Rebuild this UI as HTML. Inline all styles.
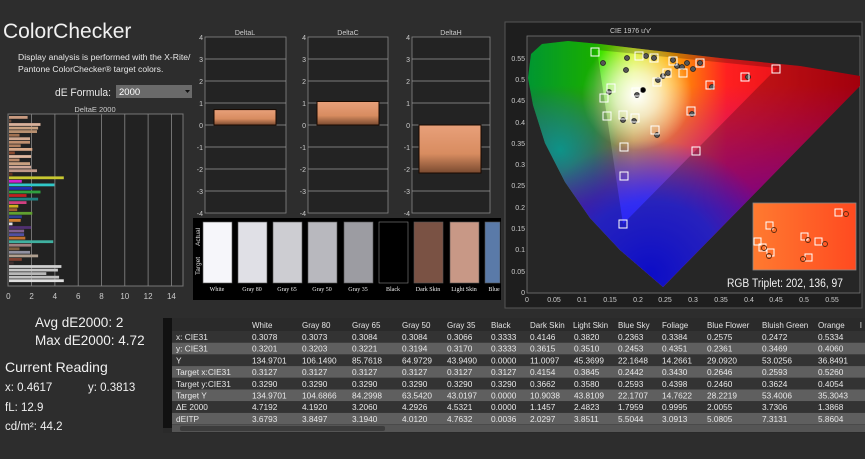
<!DOCTYPE html>
<html><head><meta charset="utf-8"><style>
html,body{margin:0;padding:0;background:#2d2d2d;}
svg{display:block;font-family:"Liberation Sans",sans-serif;}
</style></head><body>
<svg width="865" height="459" viewBox="0 0 865 459" xmlns="http://www.w3.org/2000/svg">
<defs>
<linearGradient id="bar" x1="0" y1="0" x2="0" y2="1"><stop offset="0" stop-color="#e8a07a"/><stop offset="0.6" stop-color="#d88c60"/><stop offset="1" stop-color="#7a4a30"/></linearGradient>
<linearGradient id="hx" x1="527" y1="0" x2="860" y2="0" gradientUnits="userSpaceOnUse"><stop offset="0" stop-color="#00c040"/><stop offset="0.2" stop-color="#20e000"/><stop offset="0.32" stop-color="#d0f000"/><stop offset="0.42" stop-color="#ffb000"/><stop offset="0.6" stop-color="#ff2020"/><stop offset="1" stop-color="#d00010"/></linearGradient>
<radialGradient id="hv" cx="650" cy="275" r="135" gradientUnits="userSpaceOnUse"><stop offset="0" stop-color="#1010ff" stop-opacity="1"/><stop offset="0.55" stop-color="#2030ff" stop-opacity="0.85"/><stop offset="1" stop-color="#2040ff" stop-opacity="0"/></radialGradient>
<linearGradient id="mag" x1="0" y1="85" x2="0" y2="210" gradientUnits="userSpaceOnUse"><stop offset="0" stop-color="#c000b0" stop-opacity="0"/><stop offset="1" stop-color="#9000c0" stop-opacity="0.9"/></linearGradient>
<radialGradient id="cy" cx="560" cy="150" r="60" gradientUnits="userSpaceOnUse"><stop offset="0" stop-color="#00d0c0" stop-opacity="0.8"/><stop offset="1" stop-color="#00d0c0" stop-opacity="0"/></radialGradient>
<radialGradient id="wp" cx="637" cy="95" r="55" gradientUnits="userSpaceOnUse"><stop offset="0" stop-color="#fff" stop-opacity="1"/><stop offset="0.4" stop-color="#fff" stop-opacity="0.7"/><stop offset="1" stop-color="#fff" stop-opacity="0"/></radialGradient>
<linearGradient id="ins" x1="0" y1="0" x2="1" y2="0"><stop offset="0" stop-color="#ff7a30"/><stop offset="1" stop-color="#ff4a20"/></linearGradient>
<clipPath id="hs"><path d="M663,287 L620,250 L590,218 L565,182 L545,143 L533,105 L528,78 L531,54 L542,44 L568,41 L600,44 L650,50 L720,58 L800,66 L860,76 L860,86 Z"/></clipPath>
</defs>

<text x="3" y="38" font-size="21" fill="#f0f0f0">ColorChecker</text>
<text x="18" y="60" font-size="8.6" fill="#e8e8e8">Display analysis is performed with the X-Rite/</text>
<text x="18" y="72" font-size="8.6" fill="#e8e8e8">Pantone ColorChecker® target colors.</text>
<text x="55" y="96" font-size="11" fill="#e8e8e8" textLength="56" lengthAdjust="spacingAndGlyphs">dE Formula:</text>
<rect x="116" y="85" width="76" height="13" fill="#6a6a6a"/>
<text x="119" y="95" font-size="9.5" fill="#fff">2000</text>
<path d="M185,90 l5,0 l-2.5,3 z" fill="#111"/>

<text x="95" y="112" font-size="7.5" fill="#ccc" text-anchor="middle">DeltaE 2000</text>
<rect x="8" y="114" width="175" height="172" fill="#222" stroke="#777" stroke-width="1"/>
<g stroke="#888" stroke-width="0.8">
<line x1="31.6" y1="114" x2="31.6" y2="286"/><line x1="54.9" y1="114" x2="54.9" y2="286"/><line x1="78.2" y1="114" x2="78.2" y2="286"/><line x1="101.5" y1="114" x2="101.5" y2="286"/><line x1="124.8" y1="114" x2="124.8" y2="286"/><line x1="148.1" y1="114" x2="148.1" y2="286"/><line x1="171.4" y1="114" x2="171.4" y2="286"/>
</g>
<g font-size="8" fill="#ccc" text-anchor="middle">
<text x="8.3" y="299">0</text><text x="31.6" y="299">2</text><text x="54.9" y="299">4</text><text x="78.2" y="299">6</text><text x="101.5" y="299">8</text><text x="124.8" y="299">10</text><text x="148.1" y="299">12</text><text x="171.4" y="299">14</text>
</g>
<g>
<rect x="9" y="116.0" width="18.6" height="2.8" fill="#c89a80"/>
<rect x="9" y="119.6" width="2.3" height="2.8" fill="#6a4a3a"/>
<rect x="9" y="123.1" width="31.5" height="2.8" fill="#d8b09a"/>
<rect x="9" y="126.7" width="29.1" height="2.8" fill="#c8a080"/>
<rect x="9" y="130.2" width="28" height="2.8" fill="#b89070"/>
<rect x="9" y="133.8" width="10.5" height="2.8" fill="#a07050"/>
<rect x="9" y="137.3" width="21" height="2.8" fill="#d0a890"/>
<rect x="9" y="140.9" width="21" height="2.8" fill="#c09070"/>
<rect x="9" y="144.4" width="11.7" height="2.8" fill="#b08060"/>
<rect x="9" y="148.0" width="23.3" height="2.8" fill="#d8a888"/>
<rect x="9" y="151.5" width="5.8" height="2.8" fill="#8a4a30"/>
<rect x="9" y="155.1" width="22.1" height="2.8" fill="#e0b8a0"/>
<rect x="9" y="158.6" width="10.5" height="2.8" fill="#b88868"/>
<rect x="9" y="162.2" width="21" height="2.8" fill="#c8a080"/>
<rect x="9" y="165.7" width="22.1" height="2.8" fill="#d0a898"/>
<rect x="9" y="169.3" width="28" height="2.8" fill="#c09888"/>
<rect x="9" y="172.8" width="3.5" height="2.8" fill="#603020"/>
<rect x="9" y="176.4" width="54.8" height="2.8" fill="#c8c830"/>
<rect x="9" y="179.9" width="12.8" height="2.8" fill="#d020d0"/>
<rect x="9" y="183.5" width="45.4" height="2.8" fill="#30c8c8"/>
<rect x="9" y="187.0" width="23.3" height="2.8" fill="#2030b0"/>
<rect x="9" y="190.6" width="31.5" height="2.8" fill="#30a040"/>
<rect x="9" y="194.1" width="17.5" height="2.8" fill="#c02020"/>
<rect x="9" y="197.7" width="29.1" height="2.8" fill="#208080"/>
<rect x="9" y="201.2" width="17.5" height="2.8" fill="#d04080"/>
<rect x="9" y="204.8" width="9.3" height="2.8" fill="#d0b020"/>
<rect x="9" y="208.3" width="8.2" height="2.8" fill="#a06030"/>
<rect x="9" y="211.9" width="23.3" height="2.8" fill="#60a030"/>
<rect x="9" y="215.4" width="12.8" height="2.8" fill="#304090"/>
<rect x="9" y="219.0" width="11.7" height="2.8" fill="#d08030"/>
<rect x="9" y="222.5" width="3.5" height="2.8" fill="#e0e0e0"/>
<rect x="9" y="226.1" width="22.1" height="2.8" fill="#503070"/>
<rect x="9" y="229.6" width="15.1" height="2.8" fill="#806090"/>
<rect x="9" y="233.2" width="15.1" height="2.8" fill="#5050a0"/>
<rect x="9" y="236.7" width="16.3" height="2.8" fill="#c07030"/>
<rect x="9" y="240.3" width="44.3" height="2.8" fill="#40b0a0"/>
<rect x="9" y="243.8" width="22.1" height="2.8" fill="#a08080"/>
<rect x="9" y="247.4" width="10.5" height="2.8" fill="#806040"/>
<rect x="9" y="250.9" width="21" height="2.8" fill="#9090a0"/>
<rect x="9" y="254.5" width="29.1" height="2.8" fill="#b0a090"/>
<rect x="9" y="258.0" width="12.8" height="2.8" fill="#804030"/>
<rect x="9" y="261.6" width="4.7" height="2.8" fill="#403030"/>
<rect x="9" y="265.1" width="52.4" height="2.8" fill="#d0d0d0"/>
<rect x="9" y="268.7" width="48.9" height="2.8" fill="#c8c8c8"/>
<rect x="9" y="272.2" width="37.3" height="2.8" fill="#b8b8b8"/>
<rect x="9" y="275.8" width="50.1" height="2.8" fill="#c0c0c0"/>
<rect x="9" y="279.3" width="54.8" height="2.8" fill="#e0e0e0"/>
</g>

<text x="35" y="327" font-size="13.5" fill="#f0f0f0">Avg dE2000: 2</text>
<text x="35" y="345" font-size="13.5" fill="#f0f0f0">Max dE2000: 4.72</text>
<text x="5" y="372" font-size="14" fill="#f0f0f0">Current Reading</text>
<text x="5" y="391" font-size="11.5" fill="#f0f0f0">x: 0.4617</text>
<text x="88" y="391" font-size="11.5" fill="#f0f0f0">y: 0.3813</text>
<text x="5" y="411" font-size="11.5" fill="#f0f0f0">fL: 12.9</text>
<text x="5" y="430" font-size="11.5" fill="#f0f0f0">cd/m²: 44.2</text>

<g font-size="7" fill="#ccc">
<text x="245" y="35" text-anchor="middle">DeltaL</text>
<text x="348" y="35" text-anchor="middle">DeltaC</text>
<text x="451" y="35" text-anchor="middle">DeltaH</text>
</g>
<g fill="#232323" stroke="#888" stroke-width="0.8">
<rect x="205" y="37" width="81" height="176"/>
<rect x="308" y="37" width="80" height="176"/>
<rect x="412" y="37" width="78" height="176"/>
</g>
<g stroke="#999" stroke-width="0.8">
<path d="M205,59H286M205,81H286M205,103H286M205,125H286M205,147H286M205,169H286M205,191H286"/>
<path d="M308,59H388M308,81H388M308,103H388M308,125H388M308,147H388M308,169H388M308,191H388"/>
<path d="M412,59H490M412,81H490M412,103H490M412,125H490M412,147H490M412,169H490M412,191H490"/>
</g>
<g font-size="7" fill="#ccc" text-anchor="end">
<text x="203" y="40">4</text><text x="203" y="62">3</text><text x="203" y="84">2</text><text x="203" y="106">1</text><text x="203" y="128">0</text><text x="203" y="150">-1</text><text x="203" y="172">-2</text><text x="203" y="194">-3</text><text x="203" y="216">-4</text>
<text x="306" y="40">4</text><text x="306" y="62">3</text><text x="306" y="84">2</text><text x="306" y="106">1</text><text x="306" y="128">0</text><text x="306" y="150">-1</text><text x="306" y="172">-2</text><text x="306" y="194">-3</text><text x="306" y="216">-4</text>
<text x="410" y="40">4</text><text x="410" y="62">3</text><text x="410" y="84">2</text><text x="410" y="106">1</text><text x="410" y="128">0</text><text x="410" y="150">-1</text><text x="410" y="172">-2</text><text x="410" y="194">-3</text><text x="410" y="216">-4</text>
</g>
<rect x="214" y="109.6" width="62" height="15.4" fill="url(#bar)" stroke="#1a0a00" stroke-width="1"/>
<rect x="317" y="101.5" width="62" height="23.5" fill="url(#bar)" stroke="#1a0a00" stroke-width="1"/>
<rect x="419" y="125" width="62" height="48" fill="url(#bar)" stroke="#1a0a00" stroke-width="1"/>

<rect x="193" y="218" width="308" height="82" fill="#000"/>
<text transform="translate(200,246) rotate(-90)" font-size="6.5" fill="#ddd">Actual</text>
<text transform="translate(200,275) rotate(-90)" font-size="6.5" fill="#ddd">Target</text>
<g stroke="#555" stroke-width="0.6">
<rect x="203" y="222" width="29" height="61" fill="#f6f6fa"/>
<rect x="238" y="222" width="29" height="61" fill="#e0e0e6"/>
<rect x="273" y="222" width="29" height="61" fill="#cdcdd2"/>
<rect x="308" y="222" width="29" height="61" fill="#b8b8be"/>
<rect x="344" y="222" width="29" height="61" fill="#9c9ca2"/>
<rect x="379" y="222" width="29" height="61" fill="#000" stroke="#888"/>
<rect x="414" y="222" width="29" height="61" fill="#7a5244"/>
<rect x="450" y="222" width="29" height="61" fill="#c89886"/>
<rect x="485" y="222" width="15" height="61" fill="#5a7aa8"/>
</g>
<g font-size="6" fill="#eee" text-anchor="middle" font-family="Liberation Serif,serif">
<text x="217" y="291">White</text><text x="252" y="291">Gray 80</text><text x="287" y="291">Gray 65</text><text x="322" y="291">Gray 50</text><text x="358" y="291">Gray 35</text><text x="393" y="291">Black</text><text x="428" y="291">Dark Skin</text><text x="464" y="291">Light Skin</text><text x="494" y="291">Blue</text>
</g>

<rect x="505" y="22" width="357" height="286" fill="#1e1e1e" stroke="#555" stroke-width="1"/>
<text x="610" y="33" font-size="7" fill="#ccc">CIE 1976 u'v'</text>
<rect x="527" y="36" width="333" height="257" fill="#262626" stroke="#777" stroke-width="0.8"/>
<g clip-path="url(#hs)">
<rect x="520" y="36" width="345" height="260" fill="url(#hx)"/>
<rect x="520" y="36" width="345" height="260" fill="url(#mag)"/>
<rect x="520" y="36" width="345" height="260" fill="url(#cy)"/>
<rect x="520" y="36" width="345" height="260" fill="url(#hv)"/>
<rect x="520" y="36" width="345" height="260" fill="url(#wp)"/>
<path d="M520,30 H870 V300 H520 Z M597,50 L777,68 L623,224 Z" fill="#000" fill-opacity="0.22" fill-rule="evenodd"/>
</g>
<g font-size="7" fill="#ccc" text-anchor="end">
<text x="525" y="61">0.55</text><text x="525" y="82">0.5</text><text x="525" y="103">0.45</text><text x="525" y="125">0.4</text><text x="525" y="146">0.35</text><text x="525" y="167">0.3</text><text x="525" y="188">0.25</text><text x="525" y="210">0.2</text><text x="525" y="231">0.15</text><text x="525" y="252">0.1</text><text x="525" y="274">0.05</text><text x="525" y="295">0</text>
</g>
<g font-size="7" fill="#ccc" text-anchor="middle">
<text x="527" y="302">0</text><text x="554" y="302">0.05</text><text x="582" y="302">0.1</text><text x="610" y="302">0.15</text><text x="638" y="302">0.2</text><text x="665" y="302">0.25</text><text x="693" y="302">0.3</text><text x="721" y="302">0.35</text><text x="749" y="302">0.4</text><text x="776" y="302">0.45</text><text x="804" y="302">0.5</text><text x="832" y="302">0.55</text>
</g>
<g fill="#555" stroke="#222" stroke-width="0.8">
<circle cx="603" cy="63" r="2.5"/><circle cx="627" cy="58" r="2.5"/><circle cx="626" cy="70" r="2.5"/><circle cx="646" cy="56" r="2.5"/><circle cx="654" cy="58" r="2.5"/><circle cx="673" cy="60" r="2.5"/><circle cx="687" cy="63" r="2.5"/><circle cx="700" cy="63" r="2.5"/><circle cx="693" cy="69" r="2.5"/><circle cx="682" cy="67" r="2.5"/><circle cx="668" cy="73" r="2.5"/><circle cx="658" cy="80" r="2.5"/><circle cx="643" cy="90" r="2.5" fill="#000"/><circle cx="637" cy="95" r="2.5"/><circle cx="609" cy="92" r="2.5"/><circle cx="623" cy="120" r="2.5"/><circle cx="634" cy="121" r="2.5"/><circle cx="657" cy="135" r="2.5"/><circle cx="692" cy="114" r="2.5"/><circle cx="748" cy="77" r="2.5"/><circle cx="712" cy="87" r="2.5"/><circle cx="677" cy="66" r="2.5"/><circle cx="663" cy="76" r="2.5"/>
</g>
<g fill="none" stroke="#fff" stroke-width="1">
<rect x="591" y="48" width="8" height="8"/><rect x="635" y="52" width="8" height="8"/><rect x="650" y="54" width="8" height="8"/><rect x="669" y="57" width="8" height="8"/><rect x="696" y="59" width="8" height="8"/><rect x="741" y="73" width="8" height="8"/><rect x="772" y="65" width="8" height="8"/><rect x="706" y="81" width="8" height="8"/><rect x="653" y="78" width="8" height="8"/><rect x="632" y="88" width="8" height="8"/><rect x="607" y="84" width="8" height="8"/><rect x="600" y="94" width="8" height="8"/><rect x="603" y="112" width="8" height="8"/><rect x="619" y="111" width="8" height="8"/><rect x="631" y="114" width="8" height="8"/><rect x="651" y="126" width="8" height="8"/><rect x="687" y="107" width="8" height="8"/><rect x="692" y="147" width="8" height="8"/><rect x="620" y="143" width="8" height="8"/><rect x="620" y="172" width="8" height="8"/><rect x="619" y="220" width="8" height="8"/><rect x="679" y="69" width="8" height="8"/><rect x="663" y="69" width="8" height="8"/>
</g>
<rect x="753" y="203" width="103" height="67" fill="url(#ins)" stroke="#888" stroke-width="0.8"/>
<g fill="none" stroke="#fff" stroke-width="1">
<rect x="835" y="209" width="7" height="7"/><rect x="766" y="222" width="7" height="7"/><rect x="801" y="233" width="7" height="7"/><rect x="815" y="238" width="7" height="7"/><rect x="754" y="238" width="7" height="7"/><rect x="759" y="244" width="7" height="7"/><rect x="767" y="249" width="7" height="7"/><rect x="805" y="254" width="7" height="7"/>
</g>
<g fill="none" stroke="#5a2a10" stroke-width="0.9">
<circle cx="846" cy="214" r="2.5"/><circle cx="774" cy="230" r="2.5"/><circle cx="808" cy="240" r="2.5"/><circle cx="825" cy="244" r="2.5"/><circle cx="764" cy="248" r="2.5"/><circle cx="769" cy="256" r="2.5"/><circle cx="803" cy="259" r="2.5"/>
</g>
<rect x="722" y="274" width="135" height="16" fill="#262626"/>
<text x="727" y="287" font-size="11.5" fill="#f0f0f0" textLength="116" lengthAdjust="spacingAndGlyphs">RGB Triplet: 202, 136, 97</text>

<rect x="163" y="318" width="702" height="115" fill="#2a2a2a"/>
<rect x="163" y="318" width="9" height="110" fill="#111"/>
<g>
<rect x="172" y="331" width="693" height="11.7" fill="#333"/>
<rect x="172" y="342.7" width="693" height="11.7" fill="#5f5f5f"/>
<rect x="172" y="354.4" width="693" height="11.7" fill="#333"/>
<rect x="172" y="366.1" width="693" height="11.7" fill="#5f5f5f"/>
<rect x="172" y="377.8" width="693" height="11.7" fill="#333"/>
<rect x="172" y="389.5" width="693" height="11.7" fill="#5f5f5f"/>
<rect x="172" y="401.2" width="693" height="11.7" fill="#333"/>
<rect x="172" y="412.9" width="693" height="11.7" fill="#5f5f5f"/>
</g>
<rect x="172" y="425" width="693" height="7" fill="#555"/>
<rect x="180" y="426" width="205" height="5" fill="#3c3c3c" rx="2"/>
<g font-size="8" fill="#e4e4e4">
<text x="252" y="328">White</text><text x="302" y="328">Gray 80</text><text x="352" y="328">Gray 65</text><text x="402" y="328">Gray 50</text><text x="447" y="328">Gray 35</text><text x="491" y="328">Black</text><text x="530" y="328">Dark Skin</text><text x="573" y="328">Light Skin</text><text x="618" y="328">Blue Sky</text><text x="662" y="328">Foliage</text><text x="707" y="328">Blue Flower</text><text x="762" y="328">Bluish Green</text><text x="818" y="328">Orange</text><text x="860" y="328">l</text>
</g>
<g font-size="8.3" fill="#e8e8e8">
<text x="176" y="340">x: CIE31</text><text x="176" y="351.7">y: CIE31</text><text x="176" y="363.4">Y</text><text x="176" y="375.1">Target x:CIE31</text><text x="176" y="386.8">Target y:CIE31</text><text x="176" y="398.5">Target Y</text><text x="176" y="410.2">ΔE 2000</text><text x="176" y="421.9">dEITP</text>
</g>
<g font-size="8.3" fill="#e8e8e8">
<text y="340"><tspan x="252">0.3078</tspan><tspan x="302">0.3073</tspan><tspan x="352">0.3084</tspan><tspan x="402">0.3084</tspan><tspan x="447">0.3066</tspan><tspan x="491">0.3333</tspan><tspan x="530">0.4146</tspan><tspan x="574">0.3820</tspan><tspan x="618">0.2363</tspan><tspan x="662">0.3384</tspan><tspan x="707">0.2575</tspan><tspan x="762">0.2472</tspan><tspan x="818">0.5334</tspan></text>
<text y="351.7"><tspan x="252">0.3201</tspan><tspan x="302">0.3203</tspan><tspan x="352">0.3221</tspan><tspan x="402">0.3194</tspan><tspan x="447">0.3170</tspan><tspan x="491">0.3333</tspan><tspan x="530">0.3615</tspan><tspan x="574">0.3510</tspan><tspan x="618">0.2453</tspan><tspan x="662">0.4351</tspan><tspan x="707">0.2361</tspan><tspan x="762">0.3469</tspan><tspan x="818">0.4060</tspan></text>
<text y="363.4"><tspan x="252">134.9701</tspan><tspan x="302">106.1490</tspan><tspan x="352">85.7618</tspan><tspan x="402">64.9729</tspan><tspan x="447">43.9490</tspan><tspan x="491">0.0000</tspan><tspan x="530">11.0097</tspan><tspan x="574">45.3699</tspan><tspan x="618">22.1648</tspan><tspan x="662">14.2661</tspan><tspan x="707">29.0920</tspan><tspan x="762">53.0256</tspan><tspan x="818">36.8491</tspan></text>
<text y="375.1"><tspan x="252">0.3127</tspan><tspan x="302">0.3127</tspan><tspan x="352">0.3127</tspan><tspan x="402">0.3127</tspan><tspan x="447">0.3127</tspan><tspan x="491">0.3127</tspan><tspan x="530">0.4154</tspan><tspan x="574">0.3845</tspan><tspan x="618">0.2442</tspan><tspan x="662">0.3430</tspan><tspan x="707">0.2646</tspan><tspan x="762">0.2593</tspan><tspan x="818">0.5260</tspan></text>
<text y="386.8"><tspan x="252">0.3290</tspan><tspan x="302">0.3290</tspan><tspan x="352">0.3290</tspan><tspan x="402">0.3290</tspan><tspan x="447">0.3290</tspan><tspan x="491">0.3290</tspan><tspan x="530">0.3662</tspan><tspan x="574">0.3580</tspan><tspan x="618">0.2593</tspan><tspan x="662">0.4398</tspan><tspan x="707">0.2460</tspan><tspan x="762">0.3624</tspan><tspan x="818">0.4054</tspan></text>
<text y="398.5"><tspan x="252">134.9701</tspan><tspan x="302">104.6866</tspan><tspan x="352">84.2998</tspan><tspan x="402">63.5420</tspan><tspan x="447">43.0197</tspan><tspan x="491">0.0000</tspan><tspan x="530">10.9038</tspan><tspan x="574">43.8109</tspan><tspan x="618">22.1707</tspan><tspan x="662">14.7622</tspan><tspan x="707">28.2219</tspan><tspan x="762">53.4006</tspan><tspan x="818">35.3043</tspan></text>
<text y="410.2"><tspan x="252">4.7192</tspan><tspan x="302">4.1920</tspan><tspan x="352">3.2060</tspan><tspan x="402">4.2926</tspan><tspan x="447">4.5321</tspan><tspan x="491">0.0000</tspan><tspan x="530">1.1457</tspan><tspan x="574">2.4823</tspan><tspan x="618">1.7959</tspan><tspan x="662">0.9995</tspan><tspan x="707">2.0055</tspan><tspan x="762">3.7306</tspan><tspan x="818">1.3868</tspan></text>
<text y="421.9"><tspan x="252">3.6793</tspan><tspan x="302">3.8497</tspan><tspan x="352">3.1940</tspan><tspan x="402">4.0120</tspan><tspan x="447">4.7632</tspan><tspan x="491">0.0036</tspan><tspan x="530">2.0297</tspan><tspan x="574">3.8511</tspan><tspan x="618">5.5044</tspan><tspan x="662">3.0913</tspan><tspan x="707">5.0805</tspan><tspan x="762">7.3131</tspan><tspan x="818">5.8604</tspan></text>
</g>
</svg>
</body></html>
